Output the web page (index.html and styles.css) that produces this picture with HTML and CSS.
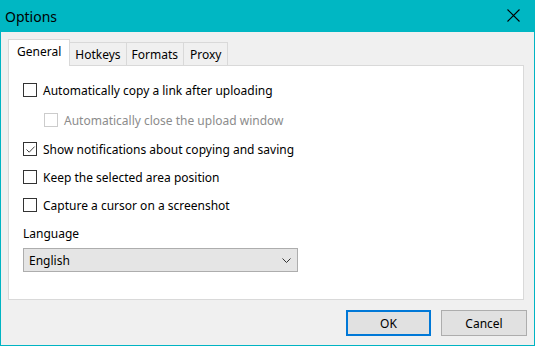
FILE: index.html
```html
<!DOCTYPE html>
<html>
<head>
<meta charset="utf-8">
<link rel="stylesheet" href="styles.css">
</head>
<body>
<div class="window">
  <div class="titlebar">
    <span class="title">Options</span>
    <svg class="close" width="13" height="13" viewBox="0 0 13 13"><path d="M0.5 0.5 L12.5 12.5 M12.5 0.5 L0.5 12.5" stroke="#000" stroke-width="1.1" fill="none"/></svg>
  </div>
  <div class="client">
    <div class="tabs">
      <div class="tab selected">General</div>
      <div class="tab">Hotkeys</div>
      <div class="tab">Formats</div>
      <div class="tab">Proxy</div>
    </div>
    <div class="panel">
      <div class="row r1"><span class="cb"></span><span>Automatically copy a link after uploading</span></div>
      <div class="row r2 disabled"><span class="cb"></span><span>Automatically close the upload window</span></div>
      <div class="row r3"><span class="cb"><svg width="11" height="11" viewBox="0 0 11 11"><path d="M1.5 5.5 L4.2 8.2 L9.6 2.6" stroke="#444" stroke-width="1" fill="none"/></svg></span><span>Show notifications about copying and saving</span></div>
      <div class="row r4"><span class="cb"></span><span>Keep the selected area position</span></div>
      <div class="row r5"><span class="cb"></span><span>Capture a cursor on a screenshot</span></div>
      <div class="label">Language</div>
      <div class="select"><span>English</span><svg width="9" height="5" viewBox="0 0 9 5"><path d="M0.5 0.5 L4.5 4.5 L8.5 0.5" stroke="#333" stroke-width="1" fill="none"/></svg></div>
    </div>
    <div class="buttons">
      <div class="btn default">OK</div>
      <div class="btn">Cancel</div>
    </div>
  </div>
</div>
</body>
</html>
```
FILE: styles.css
```css
* { box-sizing: border-box; }
html, body { margin: 0; padding: 0; }
body {
  width: 535px;
  height: 346px;
  font-family: "Noto Sans", "Open Sans", sans-serif;
  font-size: 12px;
  color: #000;
  overflow: hidden;
}
.window {
  width: 535px;
  height: 346px;
  display: flex;
  flex-direction: column;
  border-left: 1px solid #00b4c3;
  border-right: 1px solid #00b4c3;
  border-bottom: 1px solid #00b4c3;
  background: #f0f0f0;
}
.titlebar {
  height: 32px;
  flex: none;
  margin: 0 -1px;
  background: #00b7c3;
  display: flex;
  align-items: center;
  justify-content: space-between;
  padding: 0 15px 0 5px;
}
.title {
  font-size: 14px;
  color: #000;
}
.close { margin-top: -1px; }
.client {
  flex: 1;
  display: flex;
  flex-direction: column;
  padding: 7px 6px 9px 7px;
}
.tabs {
  height: 26px;
  display: flex;
  align-items: flex-end;
  flex: none;
}
.tab {
  height: 23px;
  padding: 0 5px;
  border: 1px solid #d9d9d9;
  border-bottom: none;
  border-left: none;
  background: #f0f0f0;
  display: flex;
  align-items: center;
  justify-content: center;
  white-space: nowrap;
}
.tab:last-child { padding: 0 6px 0 6px; }
.tab.selected {
  height: 27px;
  margin-bottom: -1px;
  border-left: 1px solid #d9d9d9;
  background: #fff;
  position: relative;
  z-index: 1;
  padding: 0 8px 3px 8px;
}
.panel {
  height: 235px;
  margin-right: 4px;
  background: #fff;
  border: 1px solid #d9d9d9;
  padding: 14px 0 0 14px;
  flex: none;
}
.row {
  height: 20px;
  display: flex;
  align-items: center;
  gap: 6px;
}
.row.r2 { margin-top: 10px; padding-left: 21px; }
.row.r3 { margin-top: 9px; }
.row.r4 { margin-top: 8px; }
.row.r5 { margin-top: 8px; }
.cb {
  width: 14px;
  height: 14px;
  border: 1px solid #333;
  background: #fff;
  display: flex;
  align-items: center;
  justify-content: center;
  flex: none;
}
.disabled { color: #8c8c8c; }
.disabled .cb { border-color: #cccccc; }
.label { margin-top: 11px; height: 16px; line-height: 16px; }
.select {
  margin-top: 6px;
  width: 275px;
  height: 24px;
  border: 1px solid #adadad;
  background: #e5e5e5;
  display: flex;
  align-items: center;
  justify-content: space-between;
  padding: 0 6px 0 5px;
}
.buttons {
  margin-top: 10px;
  margin-right: 1px;
  display: flex;
  justify-content: flex-end;
  gap: 10px;
  flex: none;
}
.btn {
  width: 86px;
  height: 26px;
  border: 1px solid #adadad;
  background: #e1e1e1;
  display: flex;
  align-items: center;
  justify-content: center;
}
.btn.default {
  width: 85px;
  border: 2px solid #0078d7;
}
```
